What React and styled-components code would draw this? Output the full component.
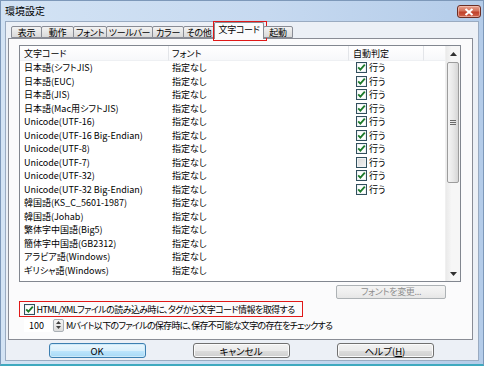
import React from "react";
import styled, { createGlobalStyle, css } from "styled-components";

const Global = createGlobalStyle`
  html, body { margin: 0; padding: 0; background: #ffffff; }
  body {
    font-family: "Noto Sans CJK JP", "Noto Sans", sans-serif;
    font-size: 9px;
    font-feature-settings: "palt";
    color: #000;
  }
  * { box-sizing: border-box; }
`;

const Window = styled.div`
  width: 484px;
  height: 366px;
  display: flex;
  flex-direction: column;
  background: linear-gradient(to right, #d3e3f4 0%, #c6d9f0 55%, #b4cce9 100%);
  border: 1px solid #7d98b9;
  border-bottom: 2px solid #3fa9bf;
`;

const TitleBar = styled.div`
  height: 20px;
  flex: none;
  display: flex;
  align-items: center;
  justify-content: space-between;
  padding: 0 2px 0 4px;
`;

const Title = styled.span`
  font-size: 10px;
  line-height: 12px;
  color: #000;
`;

const CloseButton = styled.div`
  width: 24px;
  height: 13px;
  margin-top: 1px;
  border: 1px solid #6b2e24;
  border-radius: 3px;
  background: linear-gradient(to bottom, #e7a08e 0%, #d4735c 45%, #c0412a 55%, #d0644c 100%);
  display: flex;
  align-items: center;
  justify-content: center;
  box-shadow: inset 0 0 0 1px rgba(255, 220, 210, 0.5);
`;

const Client = styled.div`
  flex: 1;
  margin: 0 4px 3px 4px;
  background: #ecf0f6;
  border: 1px solid #9aabc1;
  display: flex;
  flex-direction: column;
`;

const TabStrip = styled.div`
  height: 16px;
  flex: none;
  display: flex;
  align-items: flex-end;
  padding-left: 5px;
  position: relative;
  z-index: 2;
`;

const Tab = styled.div`
  flex: none;
  width: ${(p) => p.$w}px;
  height: ${(p) => (p.$active ? 17 : 12)}px;
  margin-bottom: ${(p) => (p.$active ? -1 : 0)}px;
  margin-left: ${(p) => (p.$first ? 0 : -1)}px;
  border: 1px solid #898c95;
  border-bottom: ${(p) => (p.$active ? "none" : "1px solid #898c95")};
  border-radius: 2px 2px 0 0;
  background: ${(p) =>
    p.$active ? "#fbfbfc" : "linear-gradient(to bottom, #f2f2f2 0%, #e6e6e6 50%, #d9d9d9 100%)"};
  display: flex;
  align-items: center;
  justify-content: center;
  font-size: 9px;
  letter-spacing: -0.3px;
  line-height: 11px;
  white-space: nowrap;
  padding-bottom: ${(p) => (p.$active ? 3 : 0)}px;
  position: relative;
  ${(p) =>
    p.$marked &&
    css`
      &::after {
        content: "";
        position: absolute;
        left: -2px;
        right: -4px;
        top: -2px;
        bottom: -2px;
        border: 1.5px solid #e01818;
      }
    `}
`;

const Panel = styled.div`
  height: 302px;
  flex: none;
  margin: 0 5px 0 2px;
  border: 1px solid #898c95;
  background: #fbfbfc;
  padding: 6px 10px 0 10px;
  display: flex;
  flex-direction: column;
`;

const ListView = styled.div`
  width: 442px;
  height: 237px;
  border: 1px solid #828790;
  background: #ffffff;
  display: flex;
`;

const Columns = styled.div`
  flex: 1;
  display: flex;
  flex-direction: column;
  overflow: hidden;
`;

const Grid = styled.div`
  display: grid;
  grid-template-columns: 149px 180px 75px 1fr;
`;

const HeaderCell = styled.div`
  height: 15px;
  line-height: 15px;
  padding-left: ${(p) => p.$pad ?? 4}px;
  border-right: ${(p) => (p.$last ? "none" : "1px solid #e3e5e9")};
  border-bottom: 1px solid #eef0f3;
  background: linear-gradient(to bottom, #ffffff 0%, #f7f8fa 100%);
  white-space: nowrap;
`;

const Cell = styled.div`
  height: 13.5px;
  line-height: 13.5px;
  padding-left: ${(p) => p.$pad ?? 4}px;
  white-space: nowrap;
  display: flex;
  align-items: center;
`;

const Box = styled.span`
  width: 11px;
  height: 11px;
  flex: none;
  border: 1px solid #32505e;
  background: ${(p) =>
    p.$checked ? "#ffffff" : "linear-gradient(135deg, #d8d8d8 0%, #f4f4f4 100%)"};
  box-shadow: inset 0 0 0 1px #eef2f4;
  display: inline-flex;
  align-items: center;
  justify-content: center;
`;

const CheckText = styled.span`
  margin-left: 2px;
`;

const Scrollbar = styled.div`
  width: 15px;
  flex: none;
  display: flex;
  flex-direction: column;
  background: linear-gradient(to right, #eaeaea 0%, #f6f6f6 40%, #f6f6f6 100%);
  border-left: 1px solid #f0f0f0;
`;

const ScrollButton = styled.div`
  height: 15px;
  flex: none;
  display: flex;
  align-items: center;
  justify-content: center;
`;

const Thumb = styled.div`
  height: 121px;
  margin: 1px 1px 0 1px;
  border: 1px solid #9c9c9c;
  border-radius: 2px;
  background: linear-gradient(to right, #f4f4f4 0%, #e8e8e8 50%, #d6d6d6 100%);
  display: flex;
  align-items: center;
  justify-content: center;
`;

const Track = styled.div`
  flex: 1;
`;

const FontButtonRow = styled.div`
  display: flex;
  justify-content: flex-end;
  margin-top: 3px;
  padding-right: 16px;
`;

const SmallButton = styled.div`
  width: 110px;
  height: 14px;
  border: 1px solid #adb2b5;
  border-radius: 2px;
  background: linear-gradient(to bottom, #f4f4f4 0%, #efefef 50%, #e6e6e6 100%);
  color: #8d8d8d;
  display: flex;
  align-items: center;
  justify-content: center;
  line-height: 12px;
  letter-spacing: -0.3px;
`;

const OptionRow = styled.div`
  margin-top: 2px;
  width: 284px;
  height: 16px;
  border: 1.5px solid #e01818;
  display: flex;
  align-items: center;
  padding-left: 3.5px;
  gap: 2px;
  white-space: nowrap;
  letter-spacing: -0.55px;
`;

const SpinRow = styled.div`
  margin-top: 1px;
  height: 14px;
  display: flex;
  align-items: center;
  padding-left: 5px;
  white-space: nowrap;
`;

const NumberField = styled.div`
  width: 28px;
  height: 13px;
  background: #ffffff;
  padding-left: 5px;
  line-height: 13px;
`;

const Spin = styled.div`
  width: 11px;
  height: 13px;
  margin-left: 1px;
  border: 1px solid #aab0b6;
  border-radius: 2px;
  background: linear-gradient(to bottom, #f5f5f5, #dcdcdc);
  display: flex;
  flex-direction: column;
  align-items: center;
  justify-content: space-around;
`;

const SpinLabel = styled.span`
  margin-left: 2px;
  letter-spacing: -0.7px;
`;

const ButtonRow = styled.div`
  flex: 1;
  display: flex;
  justify-content: center;
  align-items: flex-start;
  gap: 47px;
  padding-top: 3px;
  padding-right: 2px;
`;

const DialogButton = styled.div`
  width: 97px;
  height: 15px;
  border: 1px solid ${(p) => (p.$default ? "#3c7fb1" : "#707070")};
  border-radius: 3px;
  background: ${(p) =>
    p.$default
      ? "linear-gradient(to bottom, #eaf6fd 0%, #d9f0fc 50%, #bee6fd 51%, #a7d9f5 100%)"
      : "linear-gradient(to bottom, #f2f2f2 0%, #ebebeb 50%, #dddddd 51%, #cfcfcf 100%)"};
  box-shadow: inset 0 0 0 1px ${(p) => (p.$default ? "#cdeaf9" : "#fbfbfb")};
  display: flex;
  align-items: center;
  justify-content: center;
  font-size: 9.5px;
  line-height: 12px;
`;

const U = styled.span`
  text-decoration: underline;
`;

const Check = ({ checked }) => (
  <Box $checked={checked}>
    {checked && (
      <svg width="9" height="9" viewBox="0 0 9 9">
        <path d="M1.2 4.3 L3.4 6.6 L7.8 1.6" fill="none" stroke="#1d7a2b" strokeWidth="1.8" />
      </svg>
    )}
  </Box>
);

const tabs = [
  { label: "表示", w: 31 },
  { label: "動作", w: 33 },
  { label: "フォント", w: 34 },
  { label: "ツールバー", w: 47 },
  { label: "カラー", w: 32 },
  { label: "その他", w: 32 },
  { label: "文字コード", w: 50, active: true },
  { label: "起動", w: 30 },
];

const rows = [
  ["日本語(シフトJIS)", true],
  ["日本語(EUC)", true],
  ["日本語(JIS)", true],
  ["日本語(Mac用シフトJIS)", true],
  ["Unicode(UTF-16)", true],
  ["Unicode(UTF-16 Big-Endian)", true],
  ["Unicode(UTF-8)", true],
  ["Unicode(UTF-7)", false],
  ["Unicode(UTF-32)", true],
  ["Unicode(UTF-32 Big-Endian)", true],
  ["韓国語(KS_C_5601-1987)", null],
  ["韓国語(Johab)", null],
  ["繁体字中国語(Big5)", null],
  ["簡体字中国語(GB2312)", null],
  ["アラビア語(Windows)", null],
  ["ギリシャ語(Windows)", null],
];

export default function App() {
  return (
    <>
      <Global />
      <Window>
        <TitleBar>
          <Title>環境設定</Title>
          <CloseButton>
            <svg width="10" height="8" viewBox="0 0 10 8">
              <path d="M1.5 1 L8.5 7 M8.5 1 L1.5 7" stroke="#ffffff" strokeWidth="2" />
            </svg>
          </CloseButton>
        </TitleBar>
        <Client>
          <TabStrip>
            {tabs.map((t, i) => (
              <Tab key={t.label} $w={t.w} $first={i === 0} $active={t.active} $marked={t.active}>
                {t.label}
              </Tab>
            ))}
          </TabStrip>
          <Panel>
            <ListView>
              <Columns>
                <Grid>
                  <HeaderCell>文字コード</HeaderCell>
                  <HeaderCell $pad={3}>フォント</HeaderCell>
                  <HeaderCell>自動判定</HeaderCell>
                  <HeaderCell $last />
                  {rows.map(([name, auto]) => (
                    <React.Fragment key={name}>
                      <Cell>{name}</Cell>
                      <Cell $pad={3}>指定なし</Cell>
                      <Cell $pad={7}>
                        {auto !== null && (
                          <>
                            <Check checked={auto} />
                            <CheckText>行う</CheckText>
                          </>
                        )}
                      </Cell>
                      <Cell />
                    </React.Fragment>
                  ))}
                </Grid>
              </Columns>
              <Scrollbar>
                <ScrollButton>
                  <svg width="7" height="4" viewBox="0 0 7 4">
                    <path d="M0 4 L3.5 0 L7 4 Z" fill="#303030" />
                  </svg>
                </ScrollButton>
                <Thumb>
                  <svg width="6" height="5" viewBox="0 0 6 5">
                    <path d="M0 0.5 H6 M0 2.5 H6 M0 4.5 H6" stroke="#6a6a6a" strokeWidth="1" />
                  </svg>
                </Thumb>
                <Track />
                <ScrollButton>
                  <svg width="7" height="4" viewBox="0 0 7 4">
                    <path d="M0 0 L3.5 4 L7 0 Z" fill="#303030" />
                  </svg>
                </ScrollButton>
              </Scrollbar>
            </ListView>
            <FontButtonRow>
              <SmallButton>フォントを変更...</SmallButton>
            </FontButtonRow>
            <OptionRow>
              <Check checked />
              <span>HTML/XMLファイルの読み込み時に、タグから文字コード情報を取得する</span>
            </OptionRow>
            <SpinRow>
              <NumberField>100</NumberField>
              <Spin>
                <svg width="5" height="3" viewBox="0 0 5 3">
                  <path d="M0 3 L2.5 0 L5 3 Z" fill="#404040" />
                </svg>
                <svg width="5" height="3" viewBox="0 0 5 3">
                  <path d="M0 0 L2.5 3 L5 0 Z" fill="#404040" />
                </svg>
              </Spin>
              <SpinLabel>Mバイト以下のファイルの保存時に、保存不可能な文字の存在をチェックする</SpinLabel>
            </SpinRow>
          </Panel>
          <ButtonRow>
            <DialogButton $default>OK</DialogButton>
            <DialogButton>キャンセル</DialogButton>
            <DialogButton>
              ヘルプ(<U>H</U>)
            </DialogButton>
          </ButtonRow>
        </Client>
      </Window>
    </>
  );
}
